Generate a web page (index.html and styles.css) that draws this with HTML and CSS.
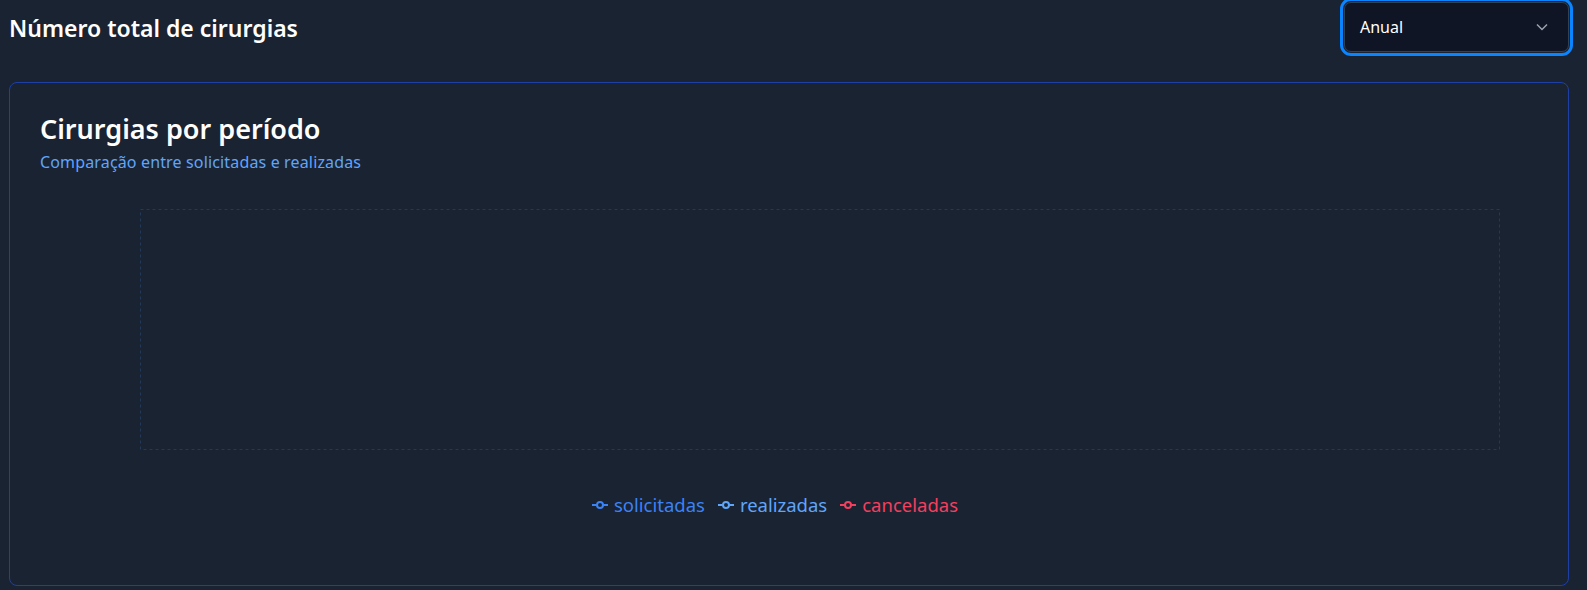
FILE: index.html
```html
<!DOCTYPE html>
<html lang="pt-BR">
<head>
<meta charset="utf-8">
<title>Número total de cirurgias</title>
<link rel="stylesheet" href="styles.css">
</head>
<body>
<div class="page">
  <header class="top">
    <h1 class="page-title">Número total de cirurgias</h1>
    <div class="select">
      <span class="select-value">Anual</span>
      <svg class="chevron" width="12" height="8" viewBox="0 0 12 8"><path d="M1 1.5 L6 6.5 L11 1.5" fill="none" stroke="#9ca3af" stroke-width="1.5"/></svg>
    </div>
  </header>
  <section class="card">
    <h2 class="card-title">Cirurgias por período</h2>
    <p class="card-sub">Comparação entre solicitadas e realizadas</p>
    <div class="chart">
      <svg class="grid" width="1361" height="242" viewBox="0 0 1361 242">
        <rect x="0.5" y="0.5" width="1359" height="240" fill="none" stroke="#22395a" stroke-width="1" stroke-dasharray="3 3"/>
      </svg>
    </div>
    <ul class="legend">
      <li class="legend-item sol">
        <svg width="16" height="16" viewBox="0 0 16 16"><path d="M0 8h4.8M11.2 8H16" stroke="currentColor" stroke-width="2"/><circle cx="8" cy="8" r="3" fill="none" stroke="currentColor" stroke-width="2"/></svg>
        <span>solicitadas</span>
      </li>
      <li class="legend-item real">
        <svg width="16" height="16" viewBox="0 0 16 16"><path d="M0 8h4.8M11.2 8H16" stroke="currentColor" stroke-width="2"/><circle cx="8" cy="8" r="3" fill="none" stroke="currentColor" stroke-width="2"/></svg>
        <span>realizadas</span>
      </li>
      <li class="legend-item canc">
        <svg width="16" height="16" viewBox="0 0 16 16"><path d="M0 8h4.8M11.2 8H16" stroke="currentColor" stroke-width="2"/><circle cx="8" cy="8" r="3" fill="none" stroke="currentColor" stroke-width="2"/></svg>
        <span>canceladas</span>
      </li>
    </ul>
  </section>
</div>
</body>
</html>
```

FILE: styles.css
```css
* { box-sizing: border-box; }
html, body {
  margin: 0;
  padding: 0;
  background: #1a2332;
  font-family: "Noto Sans", "Open Sans", sans-serif;
  color: #ffffff;
}
.page {
  width: 1560px;
  margin-left: 9px;
}
.top {
  display: flex;
  justify-content: space-between;
  align-items: center;
  height: 52px;
  margin-top: 2px;
}
.page-title {
  margin: 0;
  font-size: 23px;
  font-weight: 600;
  color: #ffffff;
}
.select {
  width: 225px;
  height: 50px;
  display: flex;
  align-items: center;
  justify-content: space-between;
  padding: 0 20px 0 15px;
  background: #0f1524;
  border: 1px solid #334155;
  border-radius: 7px;
  outline: 3px solid #0a84ff;
  outline-offset: 1px;
  align-self: flex-start;
}
.select-value {
  font-size: 16px;
  color: #ffffff;
}
.card {
  margin-top: 28px;
  height: 504px;
  border: 1px solid #1e3fa6;
  border-radius: 8px;
  padding: 28px 30px 0 30px;
}
.card-title {
  margin: 0;
  font-size: 27px;
  font-weight: 600;
  line-height: 36px;
}
.card-sub {
  margin: 4px 0 0 0;
  font-size: 16px;
  letter-spacing: 0.15px;
  line-height: 22px;
  color: #60a5fa;
}
.chart {
  margin-top: 36px;
  padding-left: 100px;
}
.grid { display: block; }
.legend {
  list-style: none;
  margin: 41px 0 0 0;
  padding: 0 28px 0 0;
  display: flex;
  justify-content: center;
  gap: 13px;
  font-size: 18.5px;
}
.legend-item {
  display: flex;
  align-items: center;
  gap: 6px;
}
.sol { color: #3b82f6; }
.real { color: #60a5fa; }
.canc { color: #f43f5e; }
```
